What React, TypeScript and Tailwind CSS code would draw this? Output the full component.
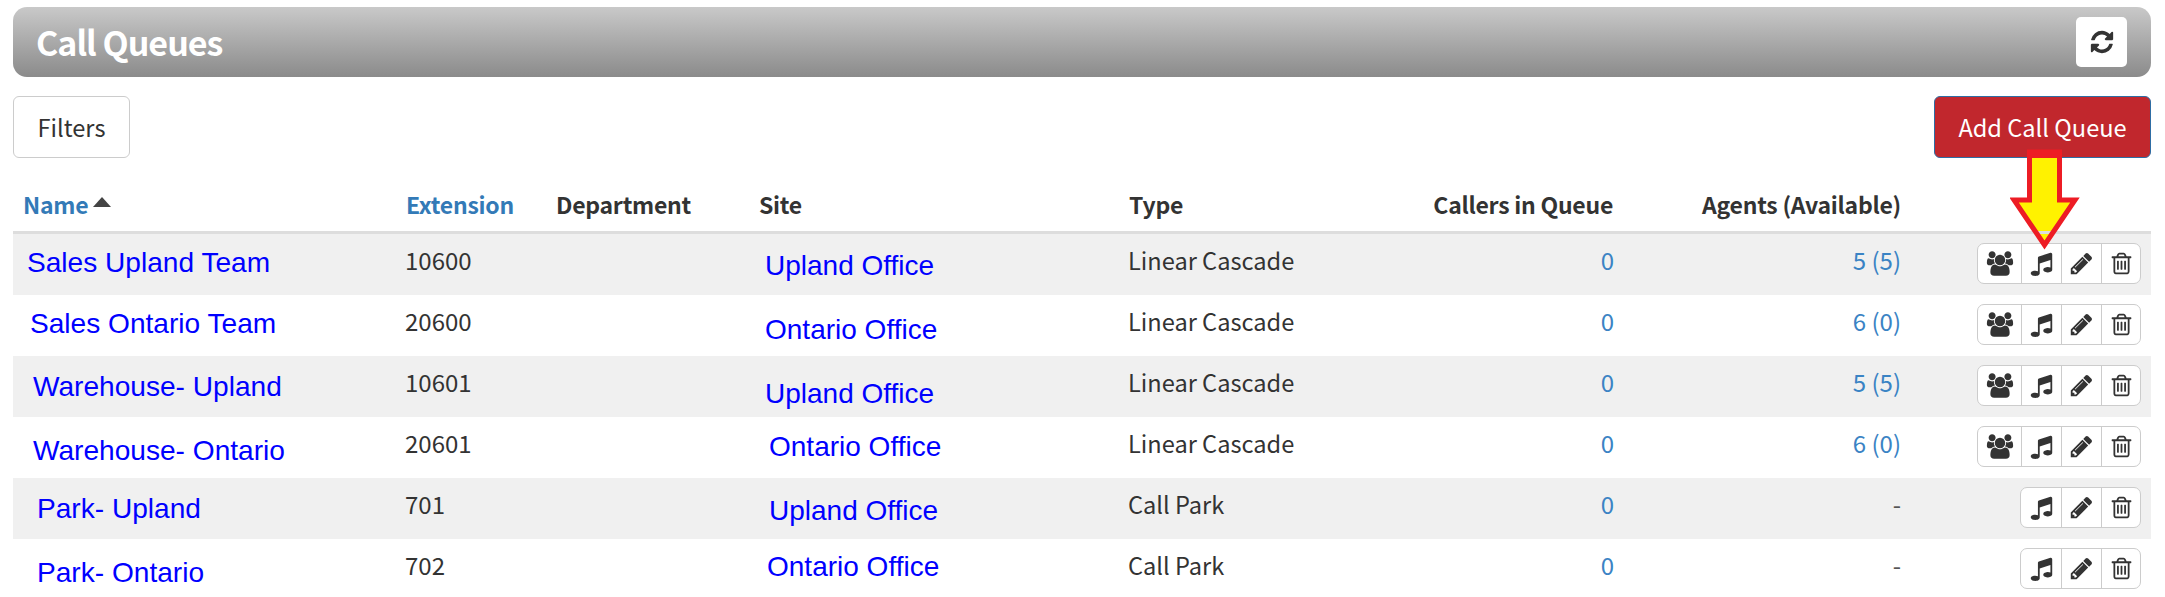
const rows = [
  { name: 'Sales Upland Team', namePad: 'pt-[12px] pl-[14px]', site: 'Upland Office', sitePad: 'pt-[15px] pl-[17px]', ext: '10600', type: 'Linear Cascade', agents: '5 (5)', team: true },
  { name: 'Sales Ontario Team', namePad: 'pt-[12px] pl-[17px]', site: 'Ontario Office', sitePad: 'pt-[18px] pl-[17px]', ext: '20600', type: 'Linear Cascade', agents: '6 (0)', team: true },
  { name: 'Warehouse- Upland', namePad: 'pt-[14px] pl-[20px]', site: 'Upland Office', sitePad: 'pt-[21px] pl-[17px]', ext: '10601', type: 'Linear Cascade', agents: '5 (5)', team: true },
  { name: 'Warehouse- Ontario', namePad: 'pt-[17px] pl-[20px]', site: 'Ontario Office', sitePad: 'pt-[13px] pl-[21px]', ext: '20601', type: 'Linear Cascade', agents: '6 (0)', team: true },
  { name: 'Park- Upland', namePad: 'pt-[14px] pl-[24px]', site: 'Upland Office', sitePad: 'pt-[16px] pl-[21px]', ext: '701', type: 'Call Park', agents: '-', team: false },
  { name: 'Park- Ontario', namePad: 'pt-[17px] pl-[24px]', site: 'Ontario Office', sitePad: 'pt-[11px] pl-[19px]', ext: '702', type: 'Call Park', agents: '-', team: false },
];

const UsersIcon = () => (
  <svg width="28" height="25" viewBox="0 0 2048 1792" fill="currentColor">
    <path d="M657 896q-162 5-265 128h-134q-82 0-138-40.5t-56-118.5q0-353 124-353 6 0 43.5 21t97.5 42.5 119 21.5q67 0 133-23-5 37-5 66 0 139 81 256zm1071 637q0 120-73 189.5t-194 69.5h-874q-121 0-194-69.5t-73-189.5q0-53 3.5-103.5t14-109 26.5-108.5 43-97.5 62-81 85.5-53.5 111.5-20q10 0 43 21.5t73 48 107 48 135 21.5 135-21.5 107-48 73-48 43-21.5q61 0 111.5 20t85.5 53.5 62 81 43 97.5 26.5 108.5 14 109 3.5 103.5zm-1024-1277q0 106-75 181t-181 75-181-75-75-181 75-181 181-75 181 75 75 181zm704 384q0 159-112.5 271.5t-271.5 112.5-271.5-112.5-112.5-271.5 112.5-271.5 271.5-112.5 271.5 112.5 112.5 271.5zm576 225q0 78-56 118.5t-138 40.5h-134q-103-123-265-128 81-117 81-256 0-29-5-66 66 23 133 23 59 0 119-21.5t97.5-42.5 43.5-21q124 0 124 353zm-128-609q0 106-75 181t-181 75-181-75-75-181 75-181 181-75 181 75 75 181z" />
  </svg>
);

const MusicIcon = () => (
  <svg width="25" height="25" viewBox="0 0 1792 1792" fill="currentColor">
    <path d="M1664 224v1120q0 50-34 89t-86 60.5-103.5 32-96.5 10.5-96.5-10.5-103.5-32-86-60.5-34-89 34-89 86-60.5 103.5-32 96.5-10.5q105 0 192 39v-537l-768 237v709q0 50-34 89t-86 60.5-103.5 32-96.5 10.5-96.5-10.5-103.5-32-86-60.5-34-89 34-89 86-60.5 103.5-32 96.5-10.5q105 0 192 39v-967q0-31 19-56.5t49-35.5l832-256q12-4 28-4 40 0 68 28t28 68z" />
  </svg>
);

const PencilIcon = () => (
  <svg width="25" height="25" viewBox="0 0 1792 1792" fill="currentColor">
    <path d="M491 1536l91-91-235-235-91 91v107h128v128h107zm523-928q0-22-22-22-10 0-17 7l-542 542q-7 7-7 17 0 22 22 22 10 0 17-7l542-542q7-7 7-17zm-54-192l416 416-832 832h-416v-416zm683 96q0 53-37 90l-166 166-416-416 166-165q36-38 90-38 53 0 91 38l235 234q37 39 37 91z" />
  </svg>
);

const TrashIcon = () => (
  <svg width="25" height="25" viewBox="0 0 1792 1792" fill="currentColor">
    <path d="M704 736v576q0 14-9 23t-23 9h-64q-14 0-23-9t-9-23v-576q0-14 9-23t23-9h64q14 0 23 9t9 23zm256 0v576q0 14-9 23t-23 9h-64q-14 0-23-9t-9-23v-576q0-14 9-23t23-9h64q14 0 23 9t9 23zm256 0v576q0 14-9 23t-23 9h-64q-14 0-23-9t-9-23v-576q0-14 9-23t23-9h64q14 0 23 9t9 23zm128 724v-948h-896v948q0 22 7 40.5t14.5 27 10.5 8.5h832q3 0 10.5-8.5t14.5-27 7-40.5zm-672-1076h448l-48-117q-7-9-17-11h-317q-10 2-17 11zm928 32v64q0 14-9 23t-23 9h-96v948q0 83-47 143.5t-113 60.5h-832q-66 0-113-58.5t-47-141.5v-952h-96q-14 0-23-9t-9-23v-64q0-14 9-23t23-9h309l70-167q15-37 54-63t79-26h320q40 0 79 26t54 63l70 167h309q14 0 23 9t9 23z" />
  </svg>
);

const RefreshIcon = () => (
  <svg width="26" height="26" viewBox="0 0 1792 1792" fill="currentColor">
    <path d="M1639 1056q0 5-1 7-64 268-268 434.5t-478 166.5q-146 0-282.5-55t-243.5-157l-129 129q-19 19-45 19t-45-19-19-45v-448q0-26 19-45t45-19h448q26 0 45 19t19 45-19 45l-137 137q71 66 161 102t187 36q134 0 250-65t186-179q11-17 53-117 8-23 30-23h192q13 0 22.5 9.5t9.5 22.5zm25-800v448q0 26-19 45t-45 19h-448q-26 0-45-19t-19-45 19-45l138-138q-148-137-349-137-134 0-250 65t-186 179q-11 17-53 117-8 23-30 23h-199q-13 0-22.5-9.5t-9.5-22.5v-7q65-268 270-434.5t480-166.5q146 0 284 55.5t245 156.5l130-129q19-19 45-19t45 19 19 45z" />
  </svg>
);

function ActionGroup({ team }: { team: boolean }) {
  const cell = 'h-full flex items-center justify-center text-[#333] border-l border-[#ccc] first:border-l-0';
  return (
    <div className="ml-auto w-fit h-[41px] flex bg-white border border-[#ccc] rounded-[7px]">
      {team && (
        <div className={cell + ' w-[43px]'}>
          <UsersIcon />
        </div>
      )}
      <div className={cell + ' w-[40px]'}>
        <MusicIcon />
      </div>
      <div className={cell + ' w-[40px]'}>
        <PencilIcon />
      </div>
      <div className={cell + ' w-[39px]'}>
        <TrashIcon />
      </div>
    </div>
  );
}

export default function App() {
  return (
    <div className="relative h-[597px] overflow-hidden bg-white pl-[13px] pr-[14px] pt-[7px] font-['Noto_Sans_CJK_SC','Liberation_Sans',sans-serif] text-[#333]">
      {/* Title bar */}
      <div className="h-[70px] rounded-[14px] bg-gradient-to-b from-[#c9c9c9] to-[#8b8b8b] flex items-center justify-between pl-[23px] pr-[24px]">
        <h1 className="text-[34px] leading-[44px] font-semibold tracking-[-1px] text-white">Call Queues</h1>
        <button className="w-[51px] h-[50px] bg-white rounded-[5px] flex items-center justify-center text-[#333]">
          <RefreshIcon />
        </button>
      </div>

      {/* Toolbar */}
      <div className="mt-[19px] flex items-center justify-between">
        <button className="w-[117px] h-[62px] pt-[2px] bg-white border border-[#ccc] rounded-[6px] text-[23.6px] text-[#333]">Filters</button>
        <button className="w-[217px] h-[62px] pt-[2px] bg-[#c1272d] border border-[#2e6da4] rounded-[6px] text-[23.6px] text-white">Add Call Queue</button>
      </div>

      <table className="w-full table-fixed border-separate border-spacing-0">
        <colgroup>
          <col className="w-[382px]" />
          <col className="w-[150px]" />
          <col className="w-[203px]" />
          <col className="w-[370px]" />
          <col className="w-[280px]" />
          <col className="w-[226px]" />
          <col className="w-[288px]" />
          <col className="w-[239px]" />
        </colgroup>
        <thead>
          <tr className="h-[76px] text-[23px] leading-[34px] font-semibold tracking-[-0.25px]">
            <th className="border-b-[3px] border-[#ddd] text-left align-bottom pb-[10px] pl-[10px]">
              <span className="text-[#337ab7]">Name</span>
              <svg className="inline-block ml-[5px] mb-[11px]" width="18" height="10" viewBox="0 0 18 10">
                <path d="M9 0 L18 10 L0 10 Z" fill="#444" />
              </svg>
            </th>
            <th className="border-b-[3px] border-[#ddd] text-left align-bottom pb-[10px] pl-[11px] text-[#337ab7]">Extension</th>
            <th className="border-b-[3px] border-[#ddd] text-left align-bottom pb-[10px] pl-[11px]">Department</th>
            <th className="border-b-[3px] border-[#ddd] text-left align-bottom pb-[10px] pl-[11px]">Site</th>
            <th className="border-b-[3px] border-[#ddd] text-left align-bottom pb-[10px] pl-[11px]">Type</th>
            <th className="border-b-[3px] border-[#ddd] text-right align-bottom pb-[10px] pr-[11px]">Callers in Queue</th>
            <th className="border-b-[3px] border-[#ddd] text-right align-bottom pb-[10px] pr-[11px]">Agents (Available)</th>
            <th className="border-b-[3px] border-[#ddd]" />
          </tr>
        </thead>
        <tbody>
          {rows.map((r) => (
            <tr key={r.name} className="h-[61px] odd:bg-[#f0f0f0] text-[24px] leading-[34px]">
              <td className={'align-top text-[28.1px] text-[#0000ff] font-["Liberation_Sans",sans-serif] ' + r.namePad}>{r.name}</td>
              <td className="align-top pt-[9px] pl-[10px]">{r.ext}</td>
              <td />
              <td className={'align-top text-[28px] text-[#0000ff] font-["Liberation_Sans",sans-serif] ' + r.sitePad}>{r.site}</td>
              <td className="align-top pt-[9px] pl-[10px] text-[23.6px]">{r.type}</td>
              <td className="align-top pt-[9px] pr-[10px] text-right text-[#3a83c4]">0</td>
              <td className={'align-top pt-[9px] pr-[11px] text-right ' + (r.team ? 'text-[#3a83c4]' : 'text-[#555]')}>{r.agents}</td>
              <td className="align-top pt-[9px] pr-[10px]">
                <ActionGroup team={r.team} />
              </td>
            </tr>
          ))}
        </tbody>
      </table>

      {/* Annotation arrow lying over the button and the table */}
      <svg className="absolute left-[2010px] top-[148px]" width="70" height="104" viewBox="0 0 70 104">
        <path d="M19.5 4 L49.5 4 L49.5 52 L65 52 L34.5 97 L4 52 L19.5 52 Z" fill="#fff200" />
        <rect x="28" y="83" width="13" height="3" fill="#ddd" />
        <path d="M19.5 4 L49.5 4 L49.5 52 L65 52 L34.5 97 L4 52 L19.5 52 Z" fill="none" stroke="#ed1c24" strokeWidth="5" strokeMiterlimit="10" />
        <rect x="17" y="2" width="35" height="8" fill="#ed1c24" />
      </svg>
    </div>
  );
}
